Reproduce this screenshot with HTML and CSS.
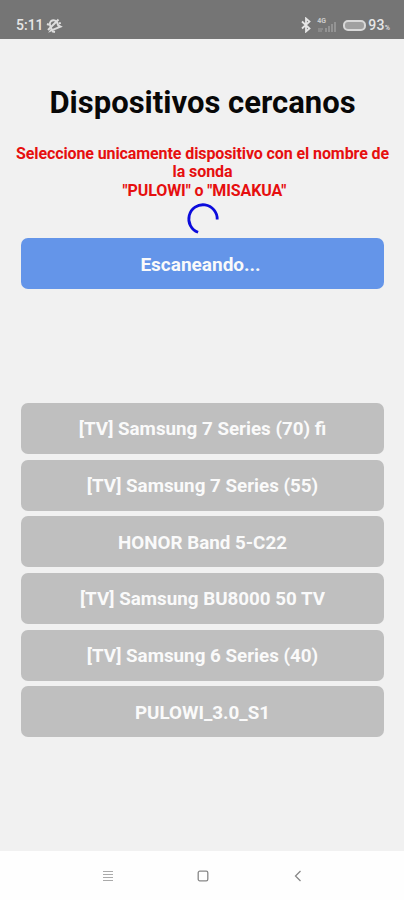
FILE: index.html
```html
<!DOCTYPE html>
<html lang="es">
<head>
  <meta charset="UTF-8">
  <title>Dispositivos cercanos</title>
  <link rel="stylesheet" href="styles.css">
</head>
<body>

  <!-- Status bar -->
  <header class="status-bar">
    <span class="time">5:11</span>
    <svg class="mute" width="18" height="18" viewBox="0 0 18 18">
      <path d="M5.2 12.2V8a3.8 3.8 0 0 1 7.6 0v3l1.6 2H4z" transform="rotate(-22 9 9)"/>
      <path d="M7 15.3l3 .6M3 14L13.500 3.500M2 8l2 .8M13.8 7.5l2-.6"/>
    </svg>
    <svg class="bluetooth" width="12" height="16" viewBox="0 0 12 16">
      <path d="M2 4.500l7.500 7L6 14.500v-13l3.500 3-7.500 7"/>
    </svg>
    <span class="network">
      <span class="network-type">4G</span>
      <svg width="20" height="13" viewBox="0 0 20 13">
        <path class="arrows" d="M1 10h5M1 12h4"/>
        <path d="M8 9h2v4H8zM11 7h2v6h-2zM14 5h2v8h-2zM17 3h2v10h-2z"/>
      </svg>
    </span>
    <span class="battery"></span>
    <span class="percent">93<small>%</small></span>
  </header>

  <main class="content">
    <h1 class="title">Dispositivos cercanos</h1>
    <p class="notice">Seleccione unicamente dispositivo con el nombre de la sonda<br>&nbsp;"PULOWI" o "MISAKUA"</p>
    <svg class="spinner" width="34" height="34" viewBox="0 0 34 34">
      <path d="M31.200 17.500A14.200 14.200 0 1 0 12.100 30.300"/>
    </svg>
    <button class="btn scan-btn">Escaneando...</button>

    <!-- Devices found -->
    <div class="devices">
      <button class="btn device">[TV] Samsung 7 Series (70) fi</button>
      <button class="btn device">[TV] Samsung 7 Series (55)</button>
      <button class="btn device">HONOR Band 5-C22</button>
      <button class="btn device">[TV] Samsung BU8000 50 TV</button>
      <button class="btn device">[TV] Samsung 6 Series (40)</button>
      <button class="btn device">PULOWI_3.0_S1</button>
    </div>
  </main>

  <!-- Phone navigation -->
  <nav class="nav-bar">
    <svg width="12" height="12" viewBox="0 0 12 12"><path class="menu-lines" d="M1 1.500h10M1 4.500h10M1 7.500h10M1 10.500h10"/></svg>
    <svg width="12" height="12" viewBox="0 0 12 12"><rect x="1.200" y="1.200" width="9.600" height="9.600" rx="1.600"/></svg>
    <svg width="12" height="12" viewBox="0 0 12 12"><path d="M8.500 1L3.500 6l5 5"/></svg>
  </nav>

</body>
</html>
```

FILE: styles.css
```css
* {
  box-sizing: border-box;
}

body {
  margin: 0;
  height: 900px;
  display: flex;
  flex-direction: column;
  font-family: Roboto, sans-serif;
  background-color: #f1f1f1;
}

.status-bar {
  height: 39px;
  padding: 11px 14px 0 16px;
  display: flex;
  align-items: center;
  background-color: #757575;
  color: #e6e6e6;
  font-size: 14px;
  font-weight: 500;
}

.time {
  width: 29px;
}

.mute {
  fill: none;
  stroke: #ddd;
  stroke-width: 2;
}

.bluetooth {
  margin-left: auto;
  fill: none;
  stroke: #e6e6e6;
  stroke-width: 1.8;
}

.network {
  position: relative;
  width: 20px;
  height: 13px;
  margin-left: 5px;
}

.network svg {
  display: block;
  fill: #939393;
}

.network .arrows {
  stroke: #a0a0a0;
}

.network-type {
  position: absolute;
  top: -2px;
  left: 0;
  font-size: 7px;
  line-height: 8px;
  font-weight: 700;
  color: #ccc;
}

.battery {
  width: 23px;
  height: 11px;
  margin: 0 2px 0 6px;
  border: 2px solid #d8d8d8;
  border-radius: 5px;
  background-color: #a0a0a0;
}

.percent {
  letter-spacing: 0.2px;
}

.percent small {
  font-size: 7px;
}

.content {
  flex: 1;
  padding: 0 20px 0 21px;
  display: flex;
  flex-direction: column;
  align-items: center;
}

.title {
  margin: 45px 0 0;
  font-size: 31px;
  line-height: 37px;
  font-weight: 700;
  color: #080808;
}

.notice {
  margin: 24px -10px 0;
  font-size: 16px;
  line-height: 18.3px;
  font-weight: 700;
  letter-spacing: -0.1px;
  text-align: center;
  color: #e60f0f;
}

.spinner {
  margin-top: 2px;
  fill: none;
  stroke: #0b0bdc;
  stroke-width: 2.8;
}

.btn {
  width: 100%;
  height: 51px;
  padding: 2px 0 0;
  border: none;
  border-radius: 7px;
  font-family: inherit;
  font-size: 18.8px;
  font-weight: 700;
  color: #fafafa;
}

.scan-btn {
  margin-top: 2px;
  padding-right: 4px;
  font-size: 19px;
  background-color: #6495e9;
}

.devices {
  width: 100%;
  margin-top: 114px;
  display: flex;
  flex-direction: column;
  gap: 5.7px;
}

.device {
  background-color: #bfbfbf;
}

.nav-bar {
  height: 49px;
  padding: 0 100px 0 102px;
  display: flex;
  align-items: center;
  justify-content: space-between;
  background-color: #fefefe;
}

.nav-bar svg {
  fill: none;
  stroke: #888;
  stroke-width: 1.3;
}

.nav-bar .menu-lines {
  stroke: #aaa;
  stroke-width: 1;
}
```
